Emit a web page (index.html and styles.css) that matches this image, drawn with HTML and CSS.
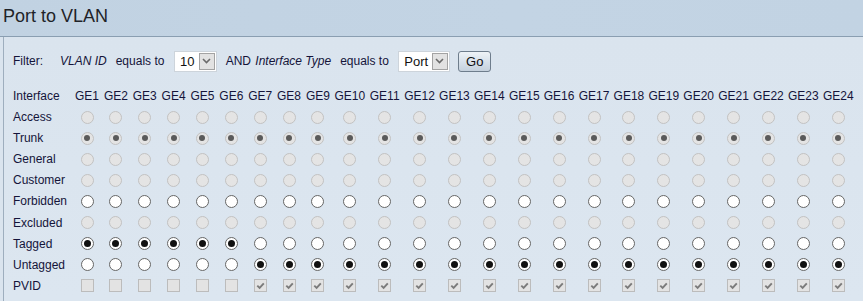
FILE: index.html
```html
<!DOCTYPE html>
<html>
<head>
<meta charset="utf-8">
<title>Port to VLAN</title>
<link rel="stylesheet" href="styles.css">
</head>
<body>
<div class="header"><h1 class="title">Port to VLAN</h1></div>
<div class="panel">
  <div class="filter">
    <span class="f-label">Filter:</span>
    <span class="f-vlan"><i>VLAN ID</i></span>
    <span class="f-eq1">equals to</span>
    <span class="sel sel-vlan"><span class="sel-val">10</span><span class="sel-btn"><svg width="9" height="6" viewBox="0 0 9 6"><path d="M1 1 L4.5 4.5 L8 1" fill="none" stroke="#6a6a6a" stroke-width="1.6"/></svg></span></span>
    <span class="f-and">AND</span>
    <span class="f-type"><i>Interface Type</i></span>
    <span class="f-eq2">equals to</span>
    <span class="sel sel-type"><span class="sel-val">Port</span><span class="sel-btn"><svg width="9" height="6" viewBox="0 0 9 6"><path d="M1 1 L4.5 4.5 L8 1" fill="none" stroke="#6a6a6a" stroke-width="1.6"/></svg></span></span>
    <span class="go">Go</span>
  </div>
  <div class="grid">
    <span class="lbl">Interface</span>
    <span class="hd">GE1</span><span class="hd">GE2</span><span class="hd">GE3</span><span class="hd">GE4</span><span class="hd">GE5</span><span class="hd">GE6</span><span class="hd">GE7</span><span class="hd">GE8</span><span class="hd">GE9</span><span class="hd">GE10</span><span class="hd">GE11</span><span class="hd">GE12</span><span class="hd">GE13</span><span class="hd">GE14</span><span class="hd">GE15</span><span class="hd">GE16</span><span class="hd">GE17</span><span class="hd">GE18</span><span class="hd">GE19</span><span class="hd">GE20</span><span class="hd">GE21</span><span class="hd">GE22</span><span class="hd">GE23</span><span class="hd">GE24</span>

    <span class="lbl">Access</span>
    <span class="r d"></span><span class="r d"></span><span class="r d"></span><span class="r d"></span><span class="r d"></span><span class="r d"></span><span class="r d"></span><span class="r d"></span><span class="r d"></span><span class="r d"></span><span class="r d"></span><span class="r d"></span><span class="r d"></span><span class="r d"></span><span class="r d"></span><span class="r d"></span><span class="r d"></span><span class="r d"></span><span class="r d"></span><span class="r d"></span><span class="r d"></span><span class="r d"></span><span class="r d"></span><span class="r d"></span>

    <span class="lbl">Trunk</span>
    <span class="r d c"></span><span class="r d c"></span><span class="r d c"></span><span class="r d c"></span><span class="r d c"></span><span class="r d c"></span><span class="r d c"></span><span class="r d c"></span><span class="r d c"></span><span class="r d c"></span><span class="r d c"></span><span class="r d c"></span><span class="r d c"></span><span class="r d c"></span><span class="r d c"></span><span class="r d c"></span><span class="r d c"></span><span class="r d c"></span><span class="r d c"></span><span class="r d c"></span><span class="r d c"></span><span class="r d c"></span><span class="r d c"></span><span class="r d c"></span>

    <span class="lbl">General</span>
    <span class="r d"></span><span class="r d"></span><span class="r d"></span><span class="r d"></span><span class="r d"></span><span class="r d"></span><span class="r d"></span><span class="r d"></span><span class="r d"></span><span class="r d"></span><span class="r d"></span><span class="r d"></span><span class="r d"></span><span class="r d"></span><span class="r d"></span><span class="r d"></span><span class="r d"></span><span class="r d"></span><span class="r d"></span><span class="r d"></span><span class="r d"></span><span class="r d"></span><span class="r d"></span><span class="r d"></span>

    <span class="lbl">Customer</span>
    <span class="r d"></span><span class="r d"></span><span class="r d"></span><span class="r d"></span><span class="r d"></span><span class="r d"></span><span class="r d"></span><span class="r d"></span><span class="r d"></span><span class="r d"></span><span class="r d"></span><span class="r d"></span><span class="r d"></span><span class="r d"></span><span class="r d"></span><span class="r d"></span><span class="r d"></span><span class="r d"></span><span class="r d"></span><span class="r d"></span><span class="r d"></span><span class="r d"></span><span class="r d"></span><span class="r d"></span>

    <span class="lbl">Forbidden</span>
    <span class="r"></span><span class="r"></span><span class="r"></span><span class="r"></span><span class="r"></span><span class="r"></span><span class="r"></span><span class="r"></span><span class="r"></span><span class="r"></span><span class="r"></span><span class="r"></span><span class="r"></span><span class="r"></span><span class="r"></span><span class="r"></span><span class="r"></span><span class="r"></span><span class="r"></span><span class="r"></span><span class="r"></span><span class="r"></span><span class="r"></span><span class="r"></span>

    <span class="lbl">Excluded</span>
    <span class="r d"></span><span class="r d"></span><span class="r d"></span><span class="r d"></span><span class="r d"></span><span class="r d"></span><span class="r d"></span><span class="r d"></span><span class="r d"></span><span class="r d"></span><span class="r d"></span><span class="r d"></span><span class="r d"></span><span class="r d"></span><span class="r d"></span><span class="r d"></span><span class="r d"></span><span class="r d"></span><span class="r d"></span><span class="r d"></span><span class="r d"></span><span class="r d"></span><span class="r d"></span><span class="r d"></span>

    <span class="lbl">Tagged</span>
    <span class="r c"></span><span class="r c"></span><span class="r c"></span><span class="r c"></span><span class="r c"></span><span class="r c"></span><span class="r"></span><span class="r"></span><span class="r"></span><span class="r"></span><span class="r"></span><span class="r"></span><span class="r"></span><span class="r"></span><span class="r"></span><span class="r"></span><span class="r"></span><span class="r"></span><span class="r"></span><span class="r"></span><span class="r"></span><span class="r"></span><span class="r"></span><span class="r"></span>

    <span class="lbl">Untagged</span>
    <span class="r"></span><span class="r"></span><span class="r"></span><span class="r"></span><span class="r"></span><span class="r"></span><span class="r c"></span><span class="r c"></span><span class="r c"></span><span class="r c"></span><span class="r c"></span><span class="r c"></span><span class="r c"></span><span class="r c"></span><span class="r c"></span><span class="r c"></span><span class="r c"></span><span class="r c"></span><span class="r c"></span><span class="r c"></span><span class="r c"></span><span class="r c"></span><span class="r c"></span><span class="r c"></span>

    <span class="lbl">PVID</span>
    <span class="cb"></span><span class="cb"></span><span class="cb"></span><span class="cb"></span><span class="cb"></span><span class="cb"></span>
    <span class="cb"><svg class="tick" width="11" height="11" viewBox="0 0 11 11"><path d="M2.3 5.6 L4.6 7.9 L8.8 3.3" fill="none" stroke="#7b7b7b" stroke-width="1.9"/></svg></span>
    <span class="cb"><svg class="tick" width="11" height="11" viewBox="0 0 11 11"><path d="M2.3 5.6 L4.6 7.9 L8.8 3.3" fill="none" stroke="#7b7b7b" stroke-width="1.9"/></svg></span>
    <span class="cb"><svg class="tick" width="11" height="11" viewBox="0 0 11 11"><path d="M2.3 5.6 L4.6 7.9 L8.8 3.3" fill="none" stroke="#7b7b7b" stroke-width="1.9"/></svg></span>
    <span class="cb"><svg class="tick" width="11" height="11" viewBox="0 0 11 11"><path d="M2.3 5.6 L4.6 7.9 L8.8 3.3" fill="none" stroke="#7b7b7b" stroke-width="1.9"/></svg></span>
    <span class="cb"><svg class="tick" width="11" height="11" viewBox="0 0 11 11"><path d="M2.3 5.6 L4.6 7.9 L8.8 3.3" fill="none" stroke="#7b7b7b" stroke-width="1.9"/></svg></span>
    <span class="cb"><svg class="tick" width="11" height="11" viewBox="0 0 11 11"><path d="M2.3 5.6 L4.6 7.9 L8.8 3.3" fill="none" stroke="#7b7b7b" stroke-width="1.9"/></svg></span>
    <span class="cb"><svg class="tick" width="11" height="11" viewBox="0 0 11 11"><path d="M2.3 5.6 L4.6 7.9 L8.8 3.3" fill="none" stroke="#7b7b7b" stroke-width="1.9"/></svg></span>
    <span class="cb"><svg class="tick" width="11" height="11" viewBox="0 0 11 11"><path d="M2.3 5.6 L4.6 7.9 L8.8 3.3" fill="none" stroke="#7b7b7b" stroke-width="1.9"/></svg></span>
    <span class="cb"><svg class="tick" width="11" height="11" viewBox="0 0 11 11"><path d="M2.3 5.6 L4.6 7.9 L8.8 3.3" fill="none" stroke="#7b7b7b" stroke-width="1.9"/></svg></span>
    <span class="cb"><svg class="tick" width="11" height="11" viewBox="0 0 11 11"><path d="M2.3 5.6 L4.6 7.9 L8.8 3.3" fill="none" stroke="#7b7b7b" stroke-width="1.9"/></svg></span>
    <span class="cb"><svg class="tick" width="11" height="11" viewBox="0 0 11 11"><path d="M2.3 5.6 L4.6 7.9 L8.8 3.3" fill="none" stroke="#7b7b7b" stroke-width="1.9"/></svg></span>
    <span class="cb"><svg class="tick" width="11" height="11" viewBox="0 0 11 11"><path d="M2.3 5.6 L4.6 7.9 L8.8 3.3" fill="none" stroke="#7b7b7b" stroke-width="1.9"/></svg></span>
    <span class="cb"><svg class="tick" width="11" height="11" viewBox="0 0 11 11"><path d="M2.3 5.6 L4.6 7.9 L8.8 3.3" fill="none" stroke="#7b7b7b" stroke-width="1.9"/></svg></span>
    <span class="cb"><svg class="tick" width="11" height="11" viewBox="0 0 11 11"><path d="M2.3 5.6 L4.6 7.9 L8.8 3.3" fill="none" stroke="#7b7b7b" stroke-width="1.9"/></svg></span>
    <span class="cb"><svg class="tick" width="11" height="11" viewBox="0 0 11 11"><path d="M2.3 5.6 L4.6 7.9 L8.8 3.3" fill="none" stroke="#7b7b7b" stroke-width="1.9"/></svg></span>
    <span class="cb"><svg class="tick" width="11" height="11" viewBox="0 0 11 11"><path d="M2.3 5.6 L4.6 7.9 L8.8 3.3" fill="none" stroke="#7b7b7b" stroke-width="1.9"/></svg></span>
    <span class="cb"><svg class="tick" width="11" height="11" viewBox="0 0 11 11"><path d="M2.3 5.6 L4.6 7.9 L8.8 3.3" fill="none" stroke="#7b7b7b" stroke-width="1.9"/></svg></span>
    <span class="cb"><svg class="tick" width="11" height="11" viewBox="0 0 11 11"><path d="M2.3 5.6 L4.6 7.9 L8.8 3.3" fill="none" stroke="#7b7b7b" stroke-width="1.9"/></svg></span>
  </div>
</div>
</body>
</html>
```
FILE: styles.css
```css
html, body {
  margin: 0;
  padding: 0;
}
body {
  width: 863px;
  height: 301px;
  overflow: hidden;
  background: #dae4ee;
  font-family: "Liberation Sans", Arial, sans-serif;
  font-size: 12px;
  color: #14143a;
}
.header {
  height: 36px;
  background: linear-gradient(90deg, #c1d2e2 0%, #c3d4e4 60%, #c2d3e3 100%);
  border-bottom: 1px solid #8a9eb1;
}
.title {
  margin: 0;
  padding-left: 3px;
  font-size: 18px;
  font-weight: normal;
  line-height: 32px;
  color: #1f2328;
}
.panel {
  margin-left: 3px;
  height: 264px;
  border-left: 1px solid #9eaebe;
  background: linear-gradient(180deg, #dae4ee 0%, #dce6f0 100%);
  padding-top: 13px;
  padding-left: 9px;
  box-sizing: border-box;
}
.filter {
  display: flex;
  align-items: center;
  height: 22px;
  white-space: nowrap;
}
.filter i { font-style: italic; }
.f-vlan { margin-left: 17px; }
.f-eq1 { margin-left: 9px; }
.sel-vlan { margin-left: 9.6px; width: 43px; }
.f-and { margin-left: 8.7px; }
.f-type { margin-left: 4.3px; }
.f-eq2 { margin-left: 9px; }
.sel-type { margin-left: 9.4px; width: 51.4px; }
.sel {
  display: inline-flex;
  align-items: center;
  height: 21px;
  box-sizing: border-box;
  border: 1px solid #cdd4db;
  background: #fff;
}
.sel-val {
  flex: 1;
  padding-left: 5px;
  font-size: 13px;
  color: #111;
}
.sel-btn {
  width: 16px;
  height: 17px;
  margin-right: 1px;
  box-sizing: border-box;
  border: 1px solid #a3a3a3;
  background: #e2e2e2;
  display: flex;
  align-items: center;
  justify-content: center;
}
.go {
  margin-left: 8.6px;
  width: 33px;
  height: 21px;
  box-sizing: border-box;
  border: 1px solid #6e7d8c;
  border-radius: 3px;
  background: linear-gradient(180deg, #eef3f7 0%, #d6e0ea 55%, #c5d1dd 100%);
  display: flex;
  align-items: center;
  justify-content: center;
  color: #111;
  font-size: 13px;
}
.grid {
  margin-top: 13.45px;
  display: grid;
  grid-template-columns: 59.6px repeat(9, 28.86px) repeat(15, 34.9px);
  grid-auto-rows: 21.1px;
  align-items: center;
  justify-items: center;
  white-space: nowrap;
}
.lbl { justify-self: start; }
.r {
  width: 13px;
  height: 13px;
  box-sizing: border-box;
  border-radius: 50%;
  border: 1px solid #666;
  background: #fff;
  display: flex;
  align-items: center;
  justify-content: center;
}
.r.d {
  border-color: #c2c2c2;
  background: #e4e4e4;
}
.r.c::after {
  content: "";
  width: 7px;
  height: 7px;
  border-radius: 50%;
  background: #111;
}
.r.d.c::after {
  width: 6px;
  height: 6px;
  background: #5a5a5a;
}
.cb {
  width: 13px;
  height: 13px;
  box-sizing: border-box;
  border: 1px solid #bcbcbc;
  background: #e3e3e3;
  display: flex;
  align-items: center;
  justify-content: center;
}
.tick { display: block; }
```
